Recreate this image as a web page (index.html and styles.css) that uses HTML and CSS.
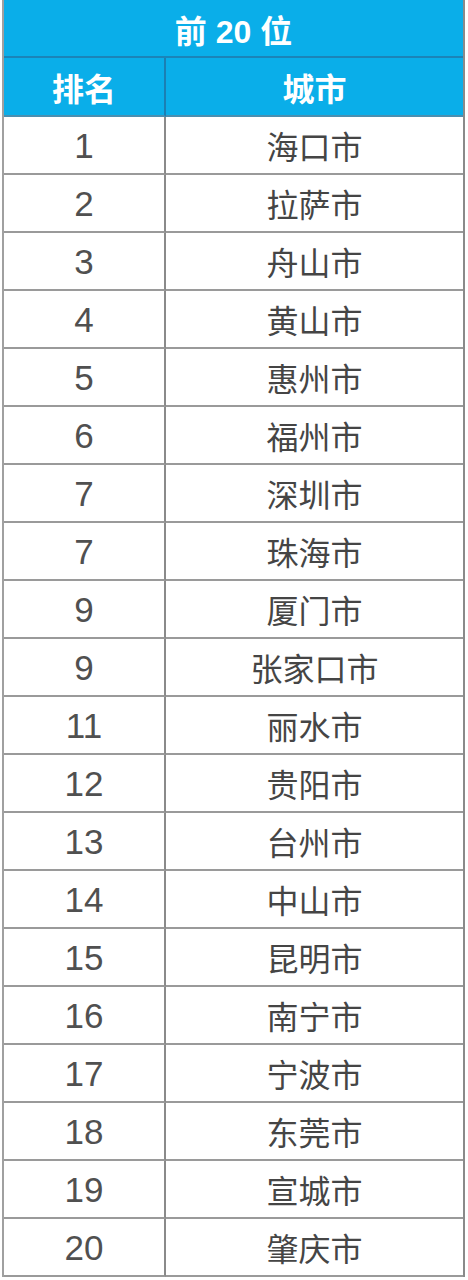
FILE: index.html
```html
<!DOCTYPE html>
<html lang="zh">
<head>
<meta charset="utf-8">
<link rel="stylesheet" href="styles.css">
</head>
<body>
<div class="table">
  <div class="title">前 20 位</div>
  <div class="head c1">排名</div>
  <div class="head c2">城市</div>
  <div class="cell c1">1</div><div class="cell c2">海口市</div>
  <div class="cell c1">2</div><div class="cell c2">拉萨市</div>
  <div class="cell c1">3</div><div class="cell c2">舟山市</div>
  <div class="cell c1">4</div><div class="cell c2">黄山市</div>
  <div class="cell c1">5</div><div class="cell c2">惠州市</div>
  <div class="cell c1">6</div><div class="cell c2">福州市</div>
  <div class="cell c1">7</div><div class="cell c2">深圳市</div>
  <div class="cell c1">7</div><div class="cell c2">珠海市</div>
  <div class="cell c1">9</div><div class="cell c2">厦门市</div>
  <div class="cell c1">9</div><div class="cell c2">张家口市</div>
  <div class="cell c1">11</div><div class="cell c2">丽水市</div>
  <div class="cell c1">12</div><div class="cell c2">贵阳市</div>
  <div class="cell c1">13</div><div class="cell c2">台州市</div>
  <div class="cell c1">14</div><div class="cell c2">中山市</div>
  <div class="cell c1">15</div><div class="cell c2">昆明市</div>
  <div class="cell c1">16</div><div class="cell c2">南宁市</div>
  <div class="cell c1">17</div><div class="cell c2">宁波市</div>
  <div class="cell c1">18</div><div class="cell c2">东莞市</div>
  <div class="cell c1">19</div><div class="cell c2">宣城市</div>
  <div class="cell c1">20</div><div class="cell c2">肇庆市</div>
</div>
</body>
</html>
```
FILE: styles.css
```css
html, body {
  margin: 0;
  padding: 0;
  background: #ffffff;
}
.table {
  margin-left: 2px;
  width: 463px;
  box-sizing: border-box;
  border-left: 2px solid #a0a0a0;
  border-right: 2px solid #8a8a8a;
  display: grid;
  grid-template-columns: 162px 1fr;
  font-family: "Liberation Sans", "Noto Sans CJK SC", sans-serif;
}
.title {
  grid-column: 1 / 3;
  height: 58px;
  box-sizing: border-box;
  background: #0aaee9;
  border-bottom: 2px solid #1b84b8;
  color: #ffffff;
  font-size: 32px;
  font-weight: bold;
  display: flex;
  align-items: center;
  justify-content: center;
  padding-top: 2px;
}
.head {
  height: 59px;
  box-sizing: border-box;
  background: #0aaee9;
  color: #ffffff;
  font-size: 32px;
  font-weight: bold;
  display: flex;
  align-items: center;
  justify-content: center;
  border-bottom: 2px solid #4a8fb0;
}
.head.c1 {
  border-right: 2px solid #1b7fb3;
}
.cell {
  height: 58px;
  box-sizing: border-box;
  border-bottom: 2px solid #9a9a9a;
  color: #454545;
  font-size: 32px;
  display: flex;
  align-items: center;
  justify-content: center;
}
.cell.c1 {
  border-right: 2px solid #8a8a8a;
  font-size: 35px;
  padding-top: 2px;
  color: #505050;
}
```
